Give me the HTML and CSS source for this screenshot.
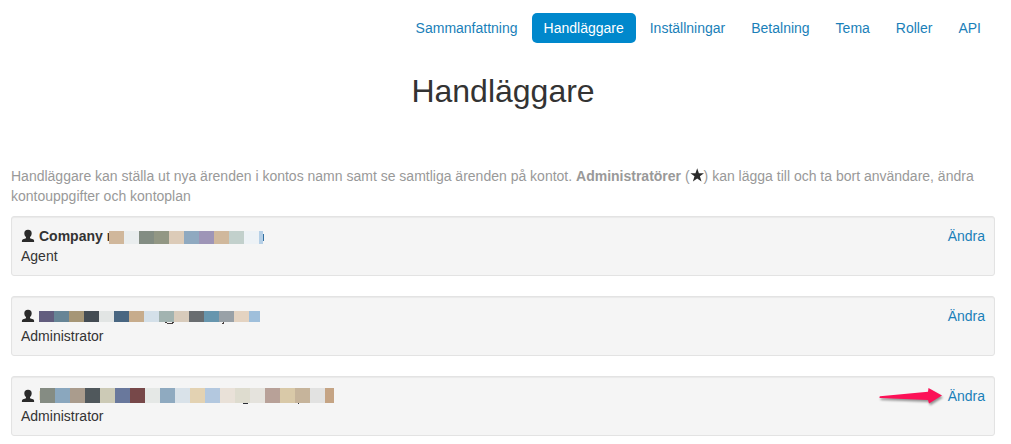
FILE: index.html
```html
<!DOCTYPE html>
<html lang="sv">
<head>
<meta charset="utf-8">
<title>Handläggare</title>
<link rel="stylesheet" href="styles.css">
</head>
<body>
<svg class="defs" aria-hidden="true">
  <symbol id="user" viewBox="0 0 14 14"><path d="M7 .8C4.500 .8 3.300 2.200 3.300 4.200C3.300 5.700 3.900 7.200 4.900 8C5.200 8.700 5 9.100 4.500 9.400L2 10.300C1.200 10.700 .9 11.300 .9 12V13H13.100V12C13.100 11.300 12.800 10.700 12 10.300L9.500 9.400C9 9.100 8.800 8.700 9.100 8C10.100 7.200 10.700 5.700 10.700 4.200C10.700 2.200 9.500 .8 7 .8Z"/></symbol>
</svg>
<header>
  <nav class="pills">
    <a href="#">Sammanfattning</a>
    <a href="#" class="active" aria-current="page">Handläggare</a>
    <a href="#">Inställningar</a>
    <a href="#">Betalning</a>
    <a href="#">Tema</a>
    <a href="#">Roller</a>
    <a href="#">API</a>
  </nav>
</header>
<main>
  <h1>Handläggare</h1>
  <p class="intro">Handläggare kan ställa ut nya ärenden i kontos namn samt se samtliga ärenden på kontot. <strong>Administratörer</strong> (<svg class="icon" viewBox="0 0 14 14" aria-label="stjärna"><path d="M7.200 .3L8.900 5.200H14L9.900 8.300L11.500 13.500L7.200 10.400L2.900 13.500L4.500 8.300L.4 5.200H5.500Z"/></svg>) kan lägga till och ta bort användare, ändra kontouppgifter och kontoplan</p>

  <section class="well">
    <div class="person">
      <div class="name">
        <svg class="icon" aria-hidden="true"><use href="#user"/></svg>
        <strong>Company r</strong>
        <svg class="mask first" width="155" height="13" shape-rendering="crispEdges" aria-hidden="true">
          <path fill="#d0b79b" d="M0 0h15v13H0z"/><path fill="#e9edee" d="M15 0h15v13H15z"/><path fill="#838d83" d="M30 0h15v13H30z"/><path fill="#929784" d="M45 0h15v13H45z"/><path fill="#dccbb8" d="M60 0h15v13H60z"/><path fill="#8fa9c0" d="M75 0h15v13H75z"/><path fill="#9e95b7" d="M90 0h15v13H90z"/><path fill="#d0b89c" d="M105 0h15v13H105z"/><path fill="#c2d0cc" d="M120 0h15v13H120z"/><path fill="#edf2f6" d="M135 0h15v13H135z"/><path fill="#b5cfe6" d="M150 0h4v13H150z"/><path fill="#326fa0" d="M154 3h1v7H154z"/>
        </svg>
      </div>
      <div>Agent</div>
    </div>
    <div class="action"><a href="#">Ändra</a></div>
  </section>

  <section class="well">
    <div class="person">
      <div class="name">
        <svg class="icon" aria-hidden="true"><use href="#user"/></svg>
        <svg class="mask" width="221" height="13" shape-rendering="crispEdges" aria-hidden="true">
          <path fill="#625d7e" d="M0 0h15v11H0z"/><path fill="#678596" d="M15 0h15v11H15z"/><path fill="#a69676" d="M30 0h15v11H30z"/><path fill="#444c53" d="M45 0h15v11H45z"/><path fill="#e2e5e4" d="M60 0h15v11H60z"/><path fill="#496681" d="M75 0h15v11H75z"/><path fill="#c7ac8c" d="M90 0h15v11H90z"/><path fill="#d4e0e9" d="M105 0h15v11H105z"/><path fill="#a2b3b0" d="M120 0h15v11H120z"/><path fill="#d8cbbb" d="M135 0h15v11H135z"/><path fill="#696d70" d="M150 0h15v11H150z"/><path fill="#6796ae" d="M165 0h15v11H165z"/><path fill="#99a1a7" d="M180 0h15v11H180z"/><path fill="#e4d3c1" d="M195 0h15v11H195z"/><path fill="#9fbfdb" d="M210 0h11v11H210z"/><path fill="#443c3c" d="M126 11h2v1H126zM133 11h2v1H133zM128 12h6v1H128zM184 11h1v1H184zM183 12h2v1H183z"/>
        </svg>
      </div>
      <div>Administrator</div>
    </div>
    <div class="action"><a href="#">Ändra</a></div>
  </section>

  <section class="well">
    <div class="person">
      <div class="name">
        <svg class="icon" aria-hidden="true"><use href="#user"/></svg>
        <svg class="mask tall" width="295" height="16" shape-rendering="crispEdges" aria-hidden="true">
          <path fill="#eadfc0" d="M0 3h1v9H0z"/><path fill="#858c83" d="M1 0h15v15H1z"/><path fill="#8aa7be" d="M16 0h15v15H16z"/><path fill="#aa9c8d" d="M31 0h15v15H31z"/><path fill="#50585c" d="M46 0h15v15H46z"/><path fill="#cccab6" d="M61 0h15v15H61z"/><path fill="#69789c" d="M76 0h15v15H76z"/><path fill="#774849" d="M91 0h15v15H91z"/><path fill="#e5e8e6" d="M106 0h15v15H106z"/><path fill="#8faac0" d="M121 0h15v15H121z"/><path fill="#d9e2e9" d="M136 0h15v15H136z"/><path fill="#e3d2b2" d="M151 0h15v15H151z"/><path fill="#b3c8df" d="M166 0h15v15H166z"/><path fill="#e9e1d8" d="M181 0h15v15H181z"/><path fill="#dedccf" d="M196 0h15v15H196z"/><path fill="#e5e3dd" d="M211 0h15v15H211z"/><path fill="#b8a198" d="M226 0h15v15H226z"/><path fill="#d9c9a8" d="M241 0h15v15H241z"/><path fill="#c6b49b" d="M256 0h15v15H256z"/><path fill="#e2e2e1" d="M271 0h15v15H271z"/><path fill="#c5a484" d="M286 0h9v15H286z"/><path fill="#2b2d35" d="M204 15h5v1H204zM259 15h1v1H259z"/>
        </svg>
      </div>
      <div>Administrator</div>
    </div>
    <div class="action">
      <svg class="arrow" width="66" height="20" viewBox="0 0 66 20" aria-hidden="true"><path fill="#fc1157" d="M2 10.200L50 5.800L50.500 2L64 9.500L51 17.500L50 14L2 12Q.8 11.200 2 10.200Z"/></svg>
      <a href="#">Ändra</a>
    </div>
  </section>
</main>
</body>
</html>
```
FILE: styles.css
```css
* { box-sizing: border-box; }
body {
  margin: 0;
  padding: 13px 16px 8px 11px;
  background: #fff;
  color: #333;
  font: 14px/20px "Liberation Sans", Arial, sans-serif;
}
a { color: #1a7fb9; text-decoration: none; }
.defs { display: block; width: 0; height: 0; }
.pills { display: flex; flex-wrap: wrap; justify-content: flex-end; gap: 2px; padding-right: 2px; }
.pills a { padding: 8px 12px; line-height: 14px; border-radius: 5px; }
.pills .active { background: #0088cc; color: #fff; }
h1 { margin: 28px 0 55px; font-size: 32px; line-height: 40px; font-weight: 400; text-align: center; }
.intro { margin: 0 0 10px; color: #999; }
.icon { width: 14px; height: 14px; fill: #2b2b2b; vertical-align: text-top; }
.well {
  display: flex;
  justify-content: space-between;
  margin-bottom: 20px;
  padding: 9px;
  background: #f5f5f5;
  border: 1px solid #e3e3e3;
  border-radius: 3px;
  box-shadow: inset 0 1px 1px rgba(0, 0, 0, .05);
}
.name { display: flex; align-items: center; height: 20px; gap: 4px; }
.mask { margin-top: 2px; }
.first { margin-left: -7px; background: #f5f5f5; }
.tall { margin-top: 0; }
.action { display: flex; align-items: flex-start; gap: 4px; }
.arrow { filter: drop-shadow(1px 2px 1px rgba(0, 0, 0, .4)); }
```
